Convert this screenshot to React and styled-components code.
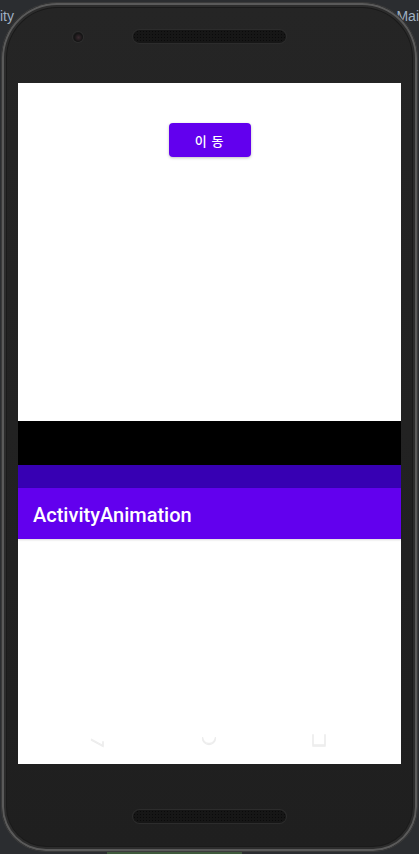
import React from 'react';
import styled, { createGlobalStyle } from 'styled-components';

const GlobalStyle = createGlobalStyle`
  html, body {
    margin: 0;
    padding: 0;
    background: #2b2d30;
    overflow: hidden;
  }
`;

const Stage = styled.div`
  position: relative;
  width: 419px;
  height: 854px;
  padding: 3px 2px 0 2px;
  box-sizing: border-box;
  background: #2b2d30;
  font-family: Roboto, "Noto Sans", sans-serif;
`;

const IdeLabel = styled.span`
  position: absolute;
  top: 7px;
  ${(p) => (p.right ? 'right: 0;' : 'left: 0;')}
  color: #9fb0c2;
  font-size: 14px;
  line-height: 18px;
  font-family: "Liberation Sans", sans-serif;
`;

const Phone = styled.div`
  position: relative;
  width: 415px;
  height: 848px;
  box-sizing: border-box;
  border-radius: 55px 55px 44px 44px;
  background: linear-gradient(180deg, #252525 0%, #1f1f1f 100%);
  box-shadow: inset 0 0 0 2px #5a5a5a, inset 0 0 0 4px #2c2c2c, inset 0 0 0 5px #1a1a1a,
    0 0 0 1px #3b3b3b;
  display: flex;
  flex-direction: column;
  align-items: center;
`;

const TopBezel = styled.div`
  height: 80px;
  width: 100%;
  box-sizing: border-box;
  padding: 27px 0 0 71px;
  display: flex;
  align-items: flex-start;
`;

const BezelRow = styled.div`
  height: 13px;
  display: flex;
  align-items: center;
  gap: 50px;
`;

const Camera = styled.div`
  width: 10px;
  height: 10px;
  border-radius: 50%;
  background: radial-gradient(circle at 55% 55%, #3a2a30 0%, #141414 55%, #2c2c2c 100%);
  box-shadow: 0 0 0 1px #2e2e2e;
`;

const Speaker = styled.div`
  width: 153px;
  height: 13px;
  border-radius: 7px;
  background-color: #161616;
  background-image: radial-gradient(circle, #0a0a0a 0.7px, transparent 0.8px);
  background-size: 3px 3px;
  box-shadow: 0 0 0 1px #2c2c2c;
`;

const Screen = styled.div`
  width: 383px;
  height: 681px;
  background: #ffffff;
  display: flex;
  flex-direction: column;
`;

const ContentArea = styled.div`
  height: 338px;
  display: flex;
  justify-content: center;
  align-items: flex-start;
  padding-top: 40px;
  box-sizing: border-box;
`;

const MoveButton = styled.button`
  width: 82px;
  height: 34px;
  border: none;
  border-radius: 4px;
  background: #6200ee;
  color: #ffffff;
  font-family: Roboto, "Noto Sans CJK KR", sans-serif;
  font-size: 13px;
  font-weight: 500;
  letter-spacing: 0.8px;
  box-shadow: 0 1px 3px rgba(0, 0, 0, 0.25);
  padding: 0;
`;

const Band = styled.div`
  height: ${(p) => p.h}px;
  background: ${(p) => p.color};
`;

const AppBar = styled.div`
  height: 51px;
  background: #6200ee;
  display: flex;
  align-items: center;
  padding: 2px 0 0 15px;
  box-sizing: border-box;
  box-shadow: 0 1px 2px rgba(0, 0, 0, 0.15);
`;

const Title = styled.h1`
  margin: 0;
  color: #ffffff;
  font-family: Roboto, sans-serif;
  font-size: 20px;
  font-weight: 500;
`;

const Filler = styled.div`
  flex: 1;
  display: flex;
  flex-direction: column;
  justify-content: flex-end;
`;

const NavBar = styled.div`
  height: 32px;
  display: flex;
  align-items: flex-start;
  justify-content: space-between;
  padding: 0 74px 0 72px;
  box-sizing: border-box;
`;

const NavIcon = styled.svg`
  width: 16px;
  height: 16px;
  fill: none;
  stroke: #ededed;
  stroke-width: 1.3;
  filter: drop-shadow(0 1px 0.5px rgba(0, 0, 0, 0.08));
`;

const BottomBezel = styled.div`
  width: 100%;
  padding-top: 46px;
  display: flex;
  justify-content: center;
`;

const EditorStrip = styled.div`
  position: absolute;
  left: 107px;
  bottom: 0;
  width: 135px;
  height: 2px;
  background: #3f5a3c;
`;

export default function App() {
  return (
    <>
      <GlobalStyle />
      <Stage>
        <IdeLabel>ity</IdeLabel>
        <IdeLabel right>Mai</IdeLabel>
        <EditorStrip />
        <Phone>
          <TopBezel>
            <BezelRow>
              <Camera />
              <Speaker />
            </BezelRow>
          </TopBezel>
          <Screen>
            <ContentArea>
              <MoveButton>이 동</MoveButton>
            </ContentArea>
            <Band h={44} color="#000000" />
            <Band h={23} color="#3700b3" />
            <AppBar>
              <Title>ActivityAnimation</Title>
            </AppBar>
            <Filler>
              <NavBar>
                <NavIcon viewBox="0 0 16 16">
                  <path d="M1 7 L13 13.5 L13 9" />
                </NavIcon>
                <NavIcon viewBox="0 0 16 16">
                  <path d="M1.5 5 A6.5 6.5 0 0 0 14.5 5" />
                </NavIcon>
                <NavIcon viewBox="0 0 16 16">
                  <path d="M2 2 L2 13 L14 13 L14 2" />
                </NavIcon>
              </NavBar>
            </Filler>
          </Screen>
          <BottomBezel>
            <Speaker />
          </BottomBezel>
        </Phone>
      </Stage>
    </>
  );
}
